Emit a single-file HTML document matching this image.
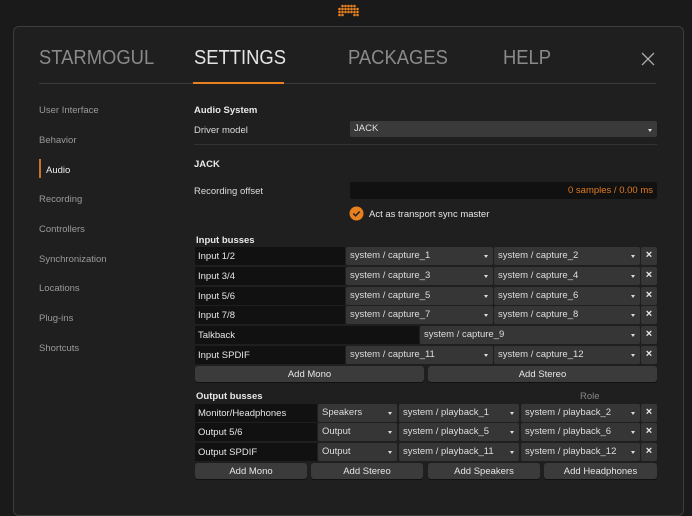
<!DOCTYPE html>
<html><head><style>
*{margin:0;padding:0;box-sizing:border-box}
body{width:692px;height:500px;background:#1a1a1a;font-family:"Liberation Sans",sans-serif;font-size:9.5px;color:#dcdcdc;position:relative;overflow:hidden}
.a{position:absolute}
#panel{left:13px;top:26px;width:671px;height:490px;background:#1f1f1f;border:1.5px solid #3d3d3d;border-radius:6px}
.tab{top:47px;font-size:20px;color:#8a8a8a;transform:scaleX(0.92);transform-origin:0 0}
.side{left:39px;color:#9a9a9a;font-size:9.5px}
.b{font-weight:bold;color:#e8e8e8}
.t{margin-top:1px}
.nm{background:#111;height:18px;line-height:19px;padding-left:3px;color:#e6e6e6;font-size:9.5px}
.dd{background:#363636;height:18px;line-height:18px;padding-left:4px;border-radius:2px;color:#dedede;font-size:9.5px}
.dd:after{content:"";position:absolute;right:5px;top:8px;border-left:2.5px solid transparent;border-right:2.5px solid transparent;border-top:3px solid #ddd}
.x{background:#363636;height:18px;width:16px;border-radius:2px;text-align:center;line-height:17px;font-weight:bold;color:#e8e8e8;font-size:11px}
.btn{background:#3b3b3b;height:16px;line-height:17px;text-align:center;border-radius:3px;color:#e6e6e6;font-size:9.5px;box-shadow:0 1px 0 #111}
</style></head><body>
<svg class="a" style="left:336px;top:4px" width="26" height="14">
<g fill="#e8801f">
<circle cx="6.5" cy="2" r="1.3"/><circle cx="9.5" cy="2" r="1.3"/><circle cx="12.5" cy="2" r="1.3"/><circle cx="15.5" cy="2" r="1.3"/><circle cx="18.5" cy="2" r="1.3"/>
<circle cx="3.5" cy="5" r="1.3"/><circle cx="6.5" cy="5" r="1.3"/><circle cx="9.5" cy="5" r="1.3"/><circle cx="12.5" cy="5" r="1.3"/><circle cx="15.5" cy="5" r="1.3"/><circle cx="18.5" cy="5" r="1.3"/><circle cx="21.5" cy="5" r="1.3"/>
<circle cx="3.5" cy="8" r="1.3"/><circle cx="6.5" cy="8" r="1.3"/><circle cx="9.5" cy="8" r="1.3"/><circle cx="12.5" cy="8" r="1.3"/><circle cx="15.5" cy="8" r="1.3"/><circle cx="18.5" cy="8" r="1.3"/><circle cx="21.5" cy="8" r="1.3"/>
<circle cx="3.5" cy="11" r="1.3"/><circle cx="6.5" cy="11" r="1.3"/><circle cx="18.5" cy="11" r="1.3"/><circle cx="21.5" cy="11" r="1.3"/>
</g></svg>
<div id="panel" class="a"></div>
<div class="a tab" style="left:39px">STARMOGUL</div>
<div class="a tab" style="left:194px;color:#e4e4e4">SETTINGS</div>
<div class="a tab" style="left:348px">PACKAGES</div>
<div class="a tab" style="left:503px">HELP</div>
<svg class="a" style="left:641px;top:52px" width="14" height="14"><path d="M1 1L13 13M13 1L1 13" stroke="#aaa" stroke-width="1.3"/></svg>
<div class="a" style="left:39px;top:83px;width:617px;height:1px;background:#3a3a3a"></div>
<div class="a" style="left:193px;top:82px;width:91px;height:2px;background:#e8801f"></div>

<div class="a side" style="top:105px">User Interface</div>
<div class="a side" style="top:135px">Behavior</div>
<div class="a" style="left:39px;top:159px;width:2px;height:19px;background:#c8742a"></div>
<div class="a side" style="left:46px;top:165px;color:#eee">Audio</div>
<div class="a side" style="top:194px">Recording</div>
<div class="a side" style="top:224px">Controllers</div>
<div class="a side" style="top:254px">Synchronization</div>
<div class="a side" style="top:283px">Locations</div>
<div class="a side" style="top:313px">Plug-ins</div>
<div class="a side" style="top:343px">Shortcuts</div>

<div class="a b" style="left:194px;top:105px">Audio System</div>
<div class="a" style="left:194px;top:125px">Driver model</div>
<div class="a dd" style="left:350px;top:121px;width:307px;height:16px;line-height:16px;background:#3a3a3a">JACK</div>
<div class="a" style="left:194px;top:144px;width:463px;height:1px;background:#333"></div>
<div class="a b" style="left:194px;top:159px">JACK</div>
<div class="a" style="left:194px;top:186px">Recording offset</div>
<div class="a" style="left:350px;top:182px;width:307px;height:17px;background:#111;border-radius:2px;color:#e07a20;text-align:right;padding-right:4px;line-height:18px">0 samples / 0.00 ms</div>
<svg class="a" style="left:349px;top:206px" width="15" height="15"><circle cx="7.5" cy="7.5" r="7" fill="#e8801f"/><path d="M4.3 7.6L6.6 9.8L10.7 5.5" stroke="#222" stroke-width="1.6" fill="none"/></svg>
<div class="a" style="left:369px;top:209px;color:#e6e6e6">Act as transport sync master</div>

<div class="a b" style="left:196px;top:235px">Input busses</div>

<div class="a nm" style="left:195px;top:247px;width:150px">Input 1/2</div>
<div class="a dd" style="left:346px;top:247px;width:147px">system / capture_1</div>
<div class="a dd" style="left:494px;top:247px;width:146px">system / capture_2</div>
<div class="a x" style="left:641px;top:247px">×</div>

<div class="a nm" style="left:195px;top:267px;width:150px">Input 3/4</div>
<div class="a dd" style="left:346px;top:267px;width:147px">system / capture_3</div>
<div class="a dd" style="left:494px;top:267px;width:146px">system / capture_4</div>
<div class="a x" style="left:641px;top:267px">×</div>

<div class="a nm" style="left:195px;top:287px;width:150px">Input 5/6</div>
<div class="a dd" style="left:346px;top:287px;width:147px">system / capture_5</div>
<div class="a dd" style="left:494px;top:287px;width:146px">system / capture_6</div>
<div class="a x" style="left:641px;top:287px">×</div>

<div class="a nm" style="left:195px;top:306px;width:150px">Input 7/8</div>
<div class="a dd" style="left:346px;top:306px;width:147px">system / capture_7</div>
<div class="a dd" style="left:494px;top:306px;width:146px">system / capture_8</div>
<div class="a x" style="left:641px;top:306px">×</div>

<div class="a nm" style="left:195px;top:326px;width:224px">Talkback</div>
<div class="a dd" style="left:420px;top:326px;width:220px">system / capture_9</div>
<div class="a x" style="left:641px;top:326px">×</div>

<div class="a nm" style="left:195px;top:346px;width:150px">Input SPDIF</div>
<div class="a dd" style="left:346px;top:346px;width:147px">system / capture_11</div>
<div class="a dd" style="left:494px;top:346px;width:146px">system / capture_12</div>
<div class="a x" style="left:641px;top:346px">×</div>

<div class="a btn" style="left:195px;top:366px;width:229px">Add Mono</div>
<div class="a btn" style="left:428px;top:366px;width:229px">Add Stereo</div>

<div class="a b" style="left:196px;top:391px">Output busses</div>
<div class="a" style="left:580px;top:391px;color:#888">Role</div>

<div class="a nm" style="left:195px;top:404px;width:122px">Monitor/Headphones</div>
<div class="a dd" style="left:318px;top:404px;width:79px">Speakers</div>
<div class="a dd" style="left:399px;top:404px;width:120px">system / playback_1</div>
<div class="a dd" style="left:521px;top:404px;width:119px">system / playback_2</div>
<div class="a x" style="left:641px;top:404px">×</div>

<div class="a nm" style="left:195px;top:423px;width:122px">Output 5/6</div>
<div class="a dd" style="left:318px;top:423px;width:79px">Output</div>
<div class="a dd" style="left:399px;top:423px;width:120px">system / playback_5</div>
<div class="a dd" style="left:521px;top:423px;width:119px">system / playback_6</div>
<div class="a x" style="left:641px;top:423px">×</div>

<div class="a nm" style="left:195px;top:443px;width:122px">Output SPDIF</div>
<div class="a dd" style="left:318px;top:443px;width:79px">Output</div>
<div class="a dd" style="left:399px;top:443px;width:120px">system / playback_11</div>
<div class="a dd" style="left:521px;top:443px;width:119px">system / playback_12</div>
<div class="a x" style="left:641px;top:443px">×</div>

<div class="a btn" style="left:195px;top:463px;width:112px">Add Mono</div>
<div class="a btn" style="left:311px;top:463px;width:112px">Add Stereo</div>
<div class="a btn" style="left:428px;top:463px;width:112px">Add Speakers</div>
<div class="a btn" style="left:544px;top:463px;width:113px">Add Headphones</div>
</body></html>
